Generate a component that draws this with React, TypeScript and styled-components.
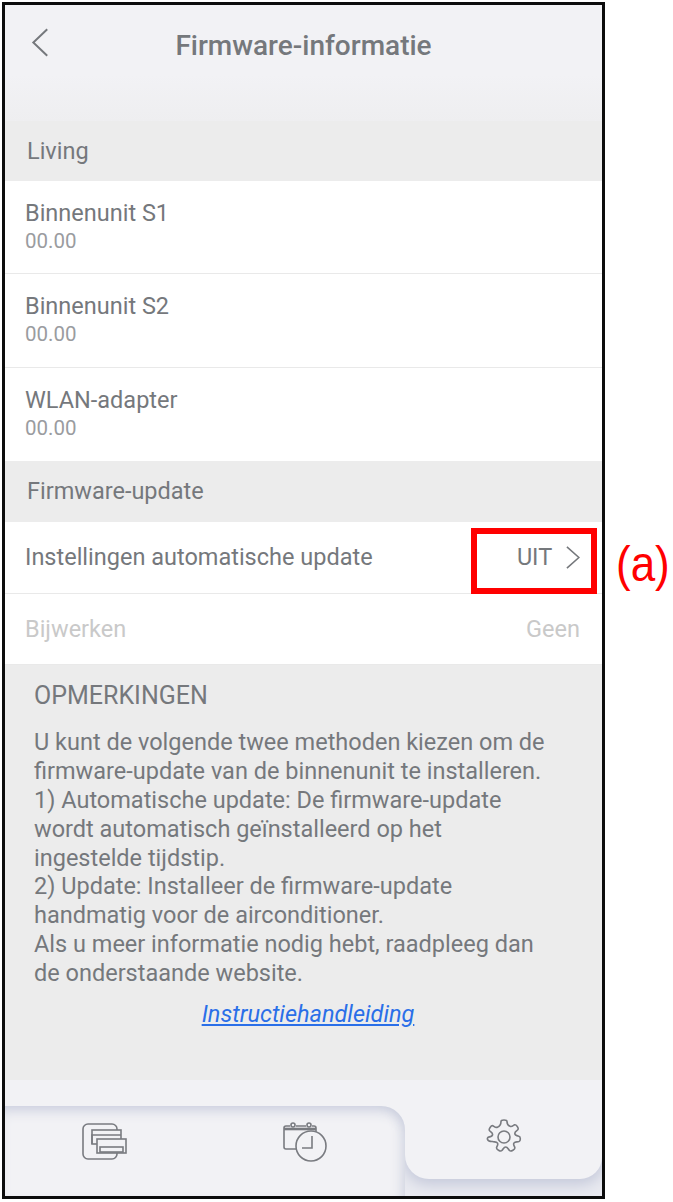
import React from 'react';
import styled, { createGlobalStyle } from 'styled-components';

const GlobalStyle = createGlobalStyle`
  html, body {
    margin: 0;
    padding: 0;
    background: #fff;
    font-family: Roboto, "Liberation Sans", sans-serif;
  }
`;

const Page = styled.div`
  width: 673px;
  height: 1202px;
  padding: 2px 0 0 2px;
  box-sizing: border-box;
  display: flex;
  align-items: flex-start;
`;

const Phone = styled.div`
  width: 603px;
  height: 1197px;
  box-sizing: border-box;
  border: 3px solid #0c0c0c;
  background: #f2f2f5;
  display: flex;
  flex-direction: column;
  overflow: hidden;
`;

const Header = styled.header`
  height: 116px;
  flex: none;
  display: flex;
  align-items: flex-start;
  justify-content: center;
  position: relative;
  background: linear-gradient(#f2f2f5 0 60%, #eeeef0 100%);
`;

const BackButton = styled.svg`
  position: absolute;
  left: 26px;
  top: 23px;
`;

const Title = styled.h1`
  margin: 23px 0 0;
  font-size: 28px;
  line-height: 36px;
  font-weight: 500;
  color: #75787c;
`;

const SectionTitle = styled.div<{ $height: number }>`
  height: ${(p) => p.$height}px;
  flex: none;
  box-sizing: border-box;
  padding-left: 22px;
  display: flex;
  align-items: center;
  background: #ececec;
  font-size: 23.5px;
  color: #75787c;
`;

const List = styled.div`
  flex: none;
  background: #fff;
`;

const UnitRow = styled.div`
  height: 93.3px;
  box-sizing: border-box;
  padding: 18px 0 0 20px;
  border-bottom: 1px solid #e9e9e9;
  &:last-child {
    border-bottom: 0;
  }
`;

const UnitName = styled.div`
  font-size: 23.5px;
  line-height: 29px;
  color: #75787c;
`;

const UnitVersion = styled.div`
  font-size: 20.5px;
  line-height: 27px;
  color: #9a9c9f;
`;

const SettingRow = styled.div<{ $height: number; $disabled?: boolean }>`
  height: ${(p) => p.$height}px;
  box-sizing: border-box;
  padding: 0 22px 0 20px;
  display: flex;
  align-items: center;
  justify-content: space-between;
  border-bottom: 1px solid #e9e9e9;
  font-size: 23.5px;
  color: ${(p) => (p.$disabled ? '#c9c9c9' : '#75787c')};
`;

const RowValue = styled.span`
  display: flex;
  align-items: center;
  gap: 14px;
`;

const Notes = styled.section`
  height: 415px;
  flex: none;
  box-sizing: border-box;
  padding: 14px 20px 0 29px;
  background: #ececec;
  color: #75787c;
`;

const NotesTitle = styled.h2`
  margin: 0 0 15px;
  font-size: 25px;
  line-height: 34px;
  font-weight: 400;
`;

const NotesText = styled.p`
  margin: 0;
  font-size: 23.5px;
  line-height: 28.9px;
`;

const ManualLink = styled.a`
  display: block;
  margin-top: 12px;
  text-align: center;
  font-size: 23.5px;
  line-height: 29px;
  font-style: italic;
  color: #2a6fe8;
  text-decoration: underline;
`;

const TabBar = styled.nav`
  flex: 1;
  min-height: 0;
  padding-top: 26px;
  display: flex;
  box-sizing: border-box;
  background: #f2f2f5;
`;

const LeftTabs = styled.div`
  width: 400px;
  flex: none;
  display: flex;
  justify-content: space-around;
  padding: 0 0 18px 0;
  box-sizing: border-box;
  align-items: center;
  border-top-right-radius: 24px;
  box-shadow: inset 0 11px 13px -7px #c9cddd, inset -11px 0 13px -9px #cdd1df;
`;

const ActiveSlot = styled.div`
  flex: 1;
  overflow: hidden;
  background: #e9eaf0;
`;

const ActiveTab = styled.div`
  height: 73px;
  display: flex;
  align-items: flex-start;
  justify-content: center;
  padding-top: 13px;
  box-sizing: border-box;
  background: #f2f2f5;
  border-radius: 0 0 22px 24px;
  box-shadow: 0 4px 14px 2px #c6cadb;
`;

const TabIcon = styled.svg`
  display: block;
  fill: none;
  stroke: #797b80;
  stroke-width: 1.6;
`;

const AnnotationBox = styled.div`
  position: absolute;
  left: 471px;
  top: 528px;
  width: 126px;
  height: 66px;
  box-sizing: border-box;
  border: 6px solid #ff0000;
`;

const AnnotationLabel = styled.div`
  position: absolute;
  left: 616px;
  top: 532px;
  font-family: "Liberation Sans", Arial, sans-serif;
  font-size: 50px;
  line-height: 64px;
  color: #ff0000;
  transform: scaleX(0.88);
  transform-origin: left center;
`;

const Chevron = ({ dir, size }: { dir: 'left' | 'right'; size: number }) => (
  <svg width={size * 0.6} height={size} viewBox="0 0 15 25" fill="none" stroke="#75787c" strokeWidth="1.7">
    <path d={dir === 'left' ? 'M14 1 2 12.5 14 24' : 'M1 1l13 11.5L1 24'} />
  </svg>
);

const App = () => {
  return (
    <Page>
      <GlobalStyle />
      <Phone>
        <Header>
          <BackButton as="div">
            <Chevron dir="left" size={29} />
          </BackButton>
          <Title>Firmware-informatie</Title>
        </Header>
        <SectionTitle $height={60}>Living</SectionTitle>
        <List>
          <UnitRow>
            <UnitName>Binnenunit S1</UnitName>
            <UnitVersion>00.00</UnitVersion>
          </UnitRow>
          <UnitRow>
            <UnitName>Binnenunit S2</UnitName>
            <UnitVersion>00.00</UnitVersion>
          </UnitRow>
          <UnitRow>
            <UnitName>WLAN-adapter</UnitName>
            <UnitVersion>00.00</UnitVersion>
          </UnitRow>
        </List>
        <SectionTitle $height={61}>Firmware-update</SectionTitle>
        <List>
          <SettingRow $height={72}>
            Instellingen automatische update
            <RowValue>
              UIT
              <Chevron dir="right" size={23} />
            </RowValue>
          </SettingRow>
          <SettingRow $height={71} $disabled>
            Bijwerken
            <span>Geen</span>
          </SettingRow>
        </List>
        <Notes>
          <NotesTitle>OPMERKINGEN</NotesTitle>
          <NotesText>
            U kunt de volgende twee methoden kiezen om de
            <br />
            firmware-update van de binnenunit te installeren.
            <br />
            1) Automatische update: De firmware-update
            <br />
            wordt automatisch geïnstalleerd op het
            <br />
            ingestelde tijdstip.
            <br />
            2) Update: Installeer de firmware-update
            <br />
            handmatig voor de airconditioner.
            <br />
            Als u meer informatie nodig hebt, raadpleeg dan
            <br />
            de onderstaande website.
          </NotesText>
          <ManualLink href="#">Instructiehandleiding</ManualLink>
        </Notes>
        <TabBar>
          <LeftTabs>
            <TabIcon width="46" height="38" viewBox="0 0 46 38">
              <rect x="1" y="1" width="34" height="35" rx="5" />
              <rect x="10" y="7" width="29" height="14" fill="#f2f2f5" />
              <path d="M10 21v-9h29" />
              <rect x="15" y="16" width="29" height="14" fill="#f2f2f5" />
              <rect x="18" y="24" width="23" height="5" />
            </TabIcon>
            <TabIcon width="46" height="42" viewBox="0 0 46 42">
              <path d="M14 28H4a2 2 0 0 1-2-2V7a2 2 0 0 1 2-2h4M14 5h10M30 5h2a2 2 0 0 1 2 2v4" />
              <path d="M2 11h32" strokeWidth="2.6" transform="translate(0 -3)" />
              <circle cx="11" cy="4" r="2" fill="#f2f2f5" />
              <circle cx="27" cy="4" r="2" fill="#f2f2f5" />
              <circle cx="29" cy="25" r="15" fill="#f2f2f5" />
              <path d="M30 15v12H20" />
            </TabIcon>
          </LeftTabs>
          <ActiveSlot>
            <ActiveTab>
              <TabIcon width="36" height="36" viewBox="0 0 36 36">
                <circle cx="18" cy="18" r="6" />
                <path d="M15 2.5c0-2 6-2 6 0 0 2.5 1 4 3 4.8 2 .8 3.400-1 4.600-1.500 1.500-.5 4.600 3.500 3.200 5-1.300 1.400-3 2-3 3.700 0 1.800 2 2.300 4 2.700 2 .5 2 4.600.2 5.300-2 .7-3.800 0-5 1.400-1.200 1.400.3 3 .8 4.600.5 1.700-3.800 4.500-5.300 3-1.400-1.400-1.800-3.500-3.800-3.500s-2.400 2.100-3.800 3.500c-1.500 1.500-5.800-1.300-5.300-3 .5-1.600 2-3.200.8-4.600-1.200-1.400-3-.7-5-1.400C.6 22.700.6 18.600 2.600 18.100c2-.4 4-.9 4-2.700 0-1.700-1.700-2.300-3-3.700C2.200 10.200 5.300 6.200 6.800 6.700c1.200.5 2.600 2.300 4.600 1.500 2-.8 3.600-3.200 3.600-5.700z" />
              </TabIcon>
            </ActiveTab>
          </ActiveSlot>
        </TabBar>
      </Phone>
      <AnnotationBox />
      <AnnotationLabel>(a)</AnnotationLabel>
    </Page>
  );
};

export default App;
